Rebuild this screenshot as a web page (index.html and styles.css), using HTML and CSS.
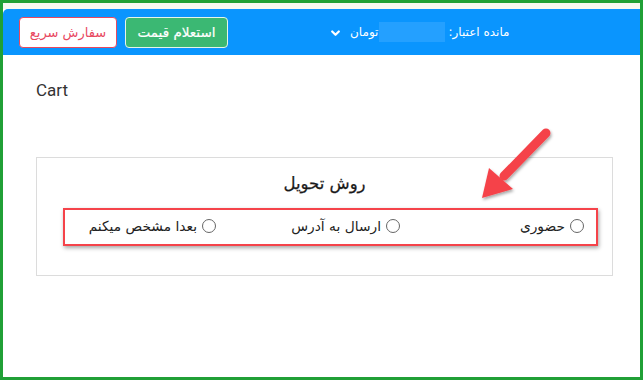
FILE: index.html
```html
<!DOCTYPE html>
<html lang="fa">
<head>
<meta charset="utf-8">
<link rel="stylesheet" href="styles.css">
</head>
<body>
<div class="frame">
  <div class="strip"></div>
  <header class="topbar">
    <div class="actions">
      <button class="btn btn-outline">سفارش سریع</button>
      <button class="btn btn-green">استعلام قیمت</button>
    </div>
    <div class="credit">
      <svg class="chev" width="9" height="7" viewBox="0 0 9 7"><path d="M1.2 1.5 L4.5 4.8 L7.8 1.5" fill="none" stroke="#fff" stroke-width="2.2" stroke-linecap="round" stroke-linejoin="round"/></svg>
      <span class="unit">تومان</span>
      <span class="blur"></span>
      <span class="label">مانده اعتبار:</span>
    </div>
  </header>
  <main class="content">
    <h1 class="page-title">Cart</h1>
    <section class="card">
      <h2 class="card-title">روش تحویل</h2>
      <div class="options">
        <label class="opt"><span class="radio"></span>حضوری</label>
        <label class="opt"><span class="radio"></span>ارسال به آدرس</label>
        <label class="opt"><span class="radio"></span>بعدا مشخص میکنم</label>
      </div>
      <div class="highlight"></div>
    </section>
    <svg class="arrow" width="90" height="100" viewBox="0 0 90 100">
      <defs>
        <filter id="sh" x="-30%" y="-30%" width="160%" height="160%">
          <feDropShadow dx="1" dy="2" stdDeviation="1.5" flood-color="#000" flood-opacity="0.35"/>
        </filter>
      </defs>
      <g filter="url(#sh)" fill="#f5434a">
        <line x1="66" y1="14" x2="24" y2="57" stroke="#f5434a" stroke-width="9" stroke-linecap="round"/>
        <polygon points="2,79 9,49 33,70"/>
      </g>
    </svg>
  </main>
</div>
</body>
</html>
```

FILE: styles.css
```css
* { box-sizing: border-box; margin: 0; padding: 0; }
html, body { width: 643px; height: 380px; background: #fff; overflow: hidden; }
body { font-family: Roboto, "DejaVu Sans", sans-serif; color: #222; }

.frame {
  width: 643px;
  height: 380px;
  border: 3px solid #20a036;
  position: relative;
  background: #fff;
}
.strip { height: 6px; background: #f7f8f1; }

.topbar {
  height: 46px;
  background: #0a95fe;
  border-radius: 5px 0 0 0;
  display: flex;
  align-items: center;
  padding-left: 16px;
}
.actions { display: flex; gap: 8px; }
.btn {
  height: 31px;
  border-radius: 4px;
  font-family: "DejaVu Sans", sans-serif;
  font-size: 13px;
  direction: rtl;
  padding: 0;
  white-space: nowrap;
  cursor: pointer;
}
.btn-outline {
  width: 98px;
  background: #fff;
  color: #e8485f;
  border: 1px solid #e8485f;
}
.btn-green {
  width: 103px;
  background: #3bb873;
  color: #fff;
  border: 1px solid #e6f4ea;
  font-size: 13.5px;
  font-weight: 500;
  -webkit-text-stroke: 0.2px #fff;
}
.credit {
  margin-left: 103px;
  display: flex;
  align-items: center;
  color: #fff;
  font-family: "DejaVu Sans", sans-serif;
  font-size: 12px;
  direction: ltr;
  white-space: nowrap;
}
.chev { margin-right: 10px; margin-top: 2px; }
.unit { direction: rtl; }
.blur { width: 66px; height: 20px; background: #24a0ff; margin: 0 3px 0 1px; }
.label { direction: rtl; }

.content { position: relative; padding: 25px 27px 0 33px; }
.page-title {
  font-family: Roboto, sans-serif;
  font-weight: 400;
  font-size: 17px;
  color: #333;
  height: 20px;
  line-height: 20px;
}
.card {
  margin-top: 57px;
  border: 1px solid #dcdcdc;
  height: 119px;
  position: relative;
  padding: 0 11px;
  direction: rtl;
}
.card-title {
  font-family: "DejaVu Sans", sans-serif;
  font-weight: 500;
  font-size: 16.5px;
  text-align: center;
  margin-top: 15px;
  height: 22px;
  line-height: 22px;
  color: #1a1a1a;
  -webkit-text-stroke: 0.25px #1a1a1a;
}
.options {
  display: grid;
  grid-template-columns: repeat(3, 184px);
  margin-top: 21px;
}
.opt {
  display: flex;
  align-items: center;
  gap: 5px;
  padding-right: 17px;
  font-family: "DejaVu Sans", sans-serif;
  font-size: 13.8px;
  color: #222;
  height: 20px;
}
.radio {
  width: 14px;
  height: 14px;
  border: 1px solid #666;
  border-radius: 50%;
  background: #fff;
  flex: none;
}
.highlight {
  position: absolute;
  left: 26px;
  top: 50px;
  width: 535px;
  height: 38px;
  border: 2px solid #f5434a;
  box-shadow: 1px 2px 4px rgba(0,0,0,0.35);
}
.arrow {
  position: absolute;
  left: 477px;
  top: 64px;
}
```
